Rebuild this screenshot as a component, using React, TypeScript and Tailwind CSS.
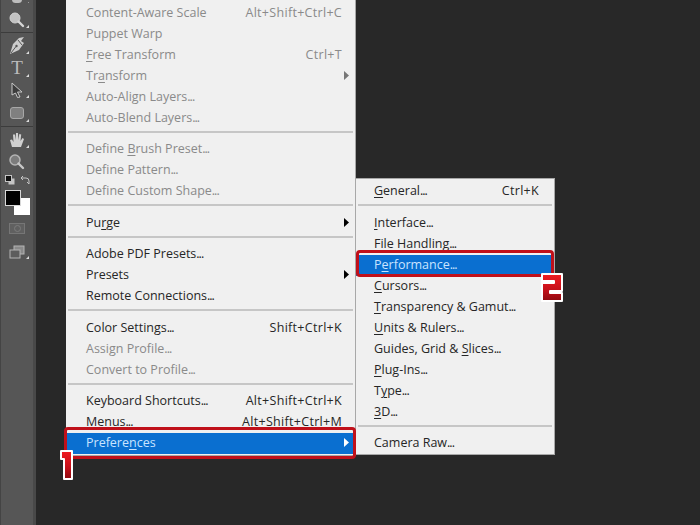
import React from 'react';

type Row = {
  label?: string;
  mark?: number;
  keys?: string;
  off?: boolean;
  arrow?: boolean;
  active?: boolean;
  sep?: number;
};

const mainMenu: Row[] = [
  { label: 'Content-Aware Scale', keys: 'Alt+Shift+Ctrl+C', off: true },
  { label: 'Puppet Warp', off: true },
  { label: 'Free Transform', mark: 0, keys: 'Ctrl+T', off: true },
  { label: 'Transform', mark: 2, off: true, arrow: true },
  { label: 'Auto-Align Layers...', off: true },
  { label: 'Auto-Blend Layers...', off: true },
  { sep: 10 },
  { label: 'Define Brush Preset...', mark: 7, off: true },
  { label: 'Define Pattern...', off: true },
  { label: 'Define Custom Shape...', off: true },
  { sep: 11 },
  { label: 'Purge', mark: 2, arrow: true },
  { sep: 10 },
  { label: 'Adobe PDF Presets...' },
  { label: 'Presets', arrow: true },
  { label: 'Remote Connections...' },
  { sep: 11 },
  { label: 'Color Settings...', keys: 'Shift+Ctrl+K' },
  { label: 'Assign Profile...', off: true },
  { label: 'Convert to Profile...', off: true },
  { sep: 10 },
  { label: 'Keyboard Shortcuts...', keys: 'Alt+Shift+Ctrl+K' },
  { label: 'Menus...', keys: 'Alt+Shift+Ctrl+M' },
  { label: 'Preferences', mark: 7, arrow: true, active: true },
];

const subMenu: Row[] = [
  { label: 'General...', mark: 0, keys: 'Ctrl+K' },
  { sep: 11 },
  { label: 'Interface...', mark: 0 },
  { label: 'File Handling...', mark: 0 },
  { label: 'Performance...', mark: 1, active: true },
  { label: 'Cursors...', mark: 0 },
  { label: 'Transparency & Gamut...', mark: 0 },
  { label: 'Units & Rulers...', mark: 0 },
  { label: 'Guides, Grid & Slices...', mark: 15 },
  { label: 'Plug-Ins...', mark: 0 },
  { label: 'Type...', mark: 1 },
  { label: '3D...', mark: 0 },
  { sep: 10 },
  { label: 'Camera Raw...', mark: 10 },
];

function Label({ text, mark }: { text: string; mark?: number }) {
  // the three dots sit tighter in the reference font
  const dots = text.endsWith('...');
  const body = dots ? text.slice(0, -3) : text;
  return (
    <span>
      {mark === undefined ? (
        body
      ) : (
        <>
          {body.slice(0, mark)}
          <span className="underline underline-offset-2">{body[mark]}</span>
          {body.slice(mark + 1)}
        </>
      )}
      {dots && <span className="tracking-[-1px]">...</span>}
    </span>
  );
}

function Arrow({ className }: { className: string }) {
  return (
    <svg width="5" height="9" viewBox="0 0 5 9" className={`absolute right-[6px] top-[5px] ${className}`}>
      <path d="M0 0 L5 4.5 L0 9 Z" />
    </svg>
  );
}

function MenuRows({ rows, textLeft, textRight }: { rows: Row[]; textLeft: string; textRight: string }) {
  return (
    <>
      {rows.map((row, i) => {
        if (row.sep) {
          return (
            <div key={i} className="px-[2px] pt-[2px]" style={{ height: row.sep }}>
              <div className="h-[2px] w-full bg-[#c6c6c6]" />
            </div>
          );
        }
        const color = row.active ? 'bg-[#0a6fd0] text-[#c9e4ff]' : row.off ? 'text-[#8a8a8a]' : 'text-[#262626]';
        const arrowColor = row.active ? 'fill-white' : row.off ? 'fill-[#777777]' : 'fill-black';
        return (
          <div key={i} className={`relative flex h-[21px] items-center justify-between ${textLeft} ${textRight} ${color}`}>
            <Label text={row.label!} mark={row.mark} />
            {row.keys && <span className="tracking-[0.3px]">{row.keys}</span>}
            {row.arrow && <Arrow className={arrowColor} />}
          </div>
        );
      })}
    </>
  );
}

function Magnifier() {
  return (
    <svg width="18" height="16" viewBox="0 0 18 16">
      <circle cx="7" cy="6" r="5" fill="#c2c2c2" stroke="#d2d2d2" />
      <path d="M10.5 9.5 L15 14" stroke="#d6d6d6" strokeWidth="2.4" strokeLinecap="round" />
    </svg>
  );
}

function Corner({ className }: { className: string }) {
  return (
    <svg width="3" height="3" viewBox="0 0 3 3" className={`absolute left-[25px] fill-[#dcdcdc] ${className}`}>
      <path d="M3 0 V3 H0 Z" />
    </svg>
  );
}

function Tool({ children, className }: { children: React.ReactNode; className?: string }) {
  return <div className={`relative flex w-full justify-center ${className ?? ''}`}>{children}</div>;
}

function Toolbar() {
  return (
    <div className="flex h-full w-[36px] shrink-0 flex-col border-r-[3px] border-l border-r-[#494949] border-l-[#444444] bg-[#565656]">
      <Tool className="h-[3px] overflow-hidden">
        <div className="relative -top-[4px] h-[7px] w-[10px] rounded-full bg-[#bdbdbd]" />
        <Corner className="bottom-[-2px]" />
      </Tool>
      <Tool className="mt-[9px]">
        <Magnifier />
        <Corner className="bottom-0" />
      </Tool>
      <div className="mt-[4px] h-px w-full bg-[#3c3c3c]" />
      <Tool className="mt-[3px]">
        <svg width="16" height="19" viewBox="0 0 16 19">
          <path d="M15 1 L10 2 L4 8 L1 18 L10 14 L15 7 L12 5 Z" fill="#cdcdcd" />
          <path d="M2 17 L7 10.5" stroke="#565656" />
          <path d="M9 4 L13 9" stroke="#565656" />
          <circle cx="7.5" cy="10" r="1.2" fill="#565656" />
        </svg>
        <Corner className="bottom-[1px]" />
      </Tool>
      <Tool className="mt-[3px]">
        <span className="text-[19px] leading-[20px] text-[#bcbcbc] [font-family:'Liberation_Serif',serif]">T</span>
        <Corner className="bottom-[1px]" />
      </Tool>
      <Tool className="mt-[4px]">
        <svg width="12" height="16" viewBox="0 0 12 16">
          <path d="M1 1 L11 10 L6.5 10 L9 15 L6.5 15.5 L4.5 11 L1 13 Z" fill="#3c3c3c" stroke="#c8c8c8" />
        </svg>
        <Corner className="bottom-0" />
      </Tool>
      <Tool className="mt-[9px]">
        <div className="h-[12px] w-[14px] rounded-[3px] border border-[#a8a8a8] bg-[#808080]" />
        <Corner className="bottom-[-3px]" />
      </Tool>
      <div className="mt-[7px] h-px w-full bg-[#3c3c3c]" />
      <Tool className="mt-[5px]">
        <svg width="16" height="16" viewBox="0 0 16 16">
          <path d="M3 15 L1 8 L3 7.5 L4.5 10 L4 2.5 L6 2.5 L6.7 8 L7 1 L9 1 L9.3 8 L10.3 2 L12.2 2.5 L11.5 9 L13.5 6 L15 7 L12 15 Z" fill="#d0d0d0" />
        </svg>
        <Corner className="bottom-0" />
      </Tool>
      <Tool className="mt-[6px]">
        <svg width="18" height="16" viewBox="0 0 18 16">
          <circle cx="7" cy="6" r="5" fill="#7c7c7c" stroke="#b4b4b4" strokeWidth="1.5" />
          <path d="M10.5 9.5 L15 14" stroke="#c8c8c8" strokeWidth="2.4" strokeLinecap="round" />
        </svg>
      </Tool>
      <Tool className="mt-[5px]">
        <div className="flex w-[25px] items-center justify-between">
          <svg width="10" height="10" viewBox="0 0 10 10">
            <rect x="3.5" y="3.5" width="6" height="6" fill="#c4c4c4" />
            <rect x="0.5" y="0.5" width="6" height="6" fill="#111111" stroke="#c4c4c4" />
          </svg>
          <svg width="10" height="10" viewBox="0 0 10 10" fill="none" stroke="#c4c4c4">
            <path d="M1 3 H6 A3 3 0 0 1 9 6 V9" />
            <path d="M3 1 L1 3 L3 5 M7 7 L9 9" />
          </svg>
        </div>
      </Tool>
      <Tool className="mt-[5px]">
        <div className="relative h-[25px] w-[25px]">
          <div className="absolute bottom-0 right-0 h-[17px] w-[16px] bg-white" />
          <div className="absolute left-0 top-0 h-[16px] w-[16px] border border-[#d8d8d8] bg-black" />
        </div>
      </Tool>
      <Tool className="mt-[8px]">
        <div className="flex h-[11px] w-[16px] items-center justify-center border border-[#767676] bg-[#606060]">
          <div className="h-[7px] w-[7px] rounded-full border border-[#7c7c7c]" />
        </div>
      </Tool>
      <Tool className="mt-[11px]">
        <svg width="16" height="14" viewBox="0 0 16 14">
          <rect x="5" y="1" width="10" height="8" fill="#8a8a8a" stroke="#b4b4b4" />
          <rect x="1" y="5" width="10" height="8" fill="#5d5d5d" stroke="#b4b4b4" />
        </svg>
        <Corner className="bottom-0" />
      </Tool>
    </div>
  );
}

export default function App() {
  return (
    <div className="relative flex h-[525px] w-[700px] overflow-hidden bg-[#282828] text-[12.5px] [font-family:'Open_Sans','Noto_Sans',sans-serif]">
      <svg width="0" height="0" className="absolute">
        <defs>
          <linearGradient id="gloss" x1="0" y1="0" x2="0" y2="1">
            <stop offset="0" stopColor="#f01c22" />
            <stop offset="0.55" stopColor="#c8101a" />
            <stop offset="1" stopColor="#8e0a10" />
          </linearGradient>
        </defs>
      </svg>

      <Toolbar />
      <div className="ml-[30px] h-[456px] w-[290px] border-r border-b border-[#a8a8a8] bg-[#f0f0f0] pt-[3px]">
        <MenuRows rows={mainMenu} textLeft="pl-[20px]" textRight="pr-[13px]" />
      </div>

      {/* Submenu */}
      <div className="absolute left-[355px] top-[178px] w-[200px] border border-[#a8a8a8] bg-[#f0f0f0] pt-[2px]">
        <MenuRows rows={subMenu} textLeft="pl-[18px]" textRight="pr-[15px]" />
      </div>

      {/* Red callouts */}
      <div className="absolute left-[64px] top-[427px] h-[32px] w-[292px] rounded-[4px] border-[3px] border-[#c0101a]" />
      <div className="absolute left-[356px] top-[250px] h-[27px] w-[198px] rounded-[4px] border-[3px] border-[#c0101a]" />
      <svg width="15" height="32" viewBox="0 0 15 32" className="absolute left-[59px] top-[449px]">
        <path d="M2 2 H13 V30 H5 V10 H2 Z" fill="url(#gloss)" stroke="#ffffff" strokeWidth="2" strokeLinejoin="round" />
      </svg>
      <svg width="24" height="31" viewBox="0 0 24 31" className="absolute left-[540px] top-[272px]">
        <path d="M2 2 H22 V19 H10 V21 H22 V29 H2 V11 H14 V9 H2 Z" fill="url(#gloss)" stroke="#ffffff" strokeWidth="2" strokeLinejoin="round" />
      </svg>
    </div>
  );
}
